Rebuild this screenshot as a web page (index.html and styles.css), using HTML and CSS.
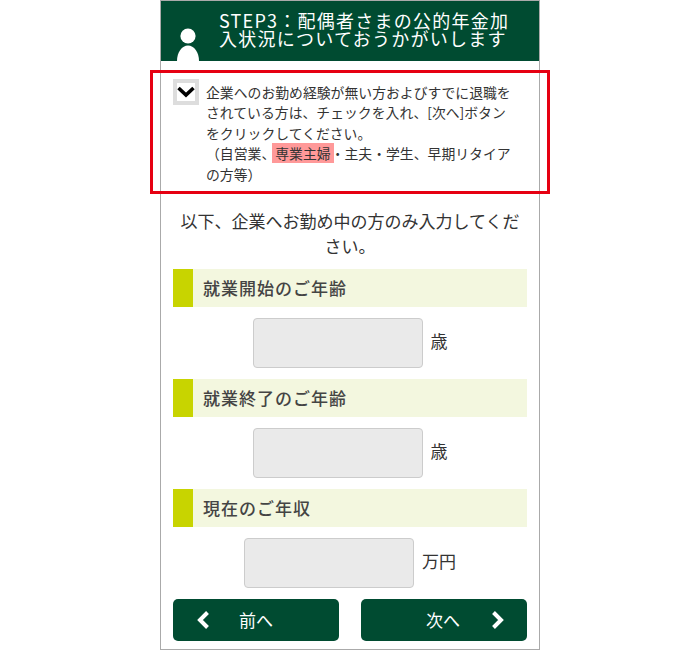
FILE: index.html
```html
<!DOCTYPE html>
<html lang="ja">
<head>
<meta charset="utf-8">
<title>STEP3</title>
<link rel="stylesheet" href="styles.css">
</head>
<body>
<div class="frame">
  <header class="head">
    <svg class="person" width="24" height="33" viewBox="0 0 24 33"><circle cx="12" cy="8" r="7.6" fill="#fff"/><path d="M1 33C1 24 6 17.5 12 17.5C18 17.5 23 24 23 33Z" fill="#fff"/></svg>
    <h1 class="head-title">STEP3：配偶者さまの公的年金加<br>入状況についておうかがいします</h1>
  </header>
  <section class="notice">
    <span class="check">
      <svg width="18" height="12" viewBox="0 0 18 12"><path d="M1.5 2L9 9L16.5 2" fill="none" stroke="#000" stroke-width="3.6"/></svg>
    </span>
    <p class="notice-text">企業へのお勤め経験が無い方およびすでに退職をされている方は、チェックを入れ、[次へ]ボタンをクリックしてください。<br>（自営業、<mark class="hl">専業主婦</mark>・主夫・学生、早期リタイアの方等）</p>
  </section>
  <p class="lead">以下、企業へお勤め中の方のみ入力してください。</p>
  <h2 class="bar">就業開始のご年齢</h2>
  <div class="row"><span class="field"></span><span class="unit">歳</span></div>
  <h2 class="bar">就業終了のご年齢</h2>
  <div class="row"><span class="field"></span><span class="unit">歳</span></div>
  <h2 class="bar">現在のご年収</h2>
  <div class="row"><span class="field"></span><span class="unit">万円</span></div>
  <nav class="nav">
    <a class="btn btn-prev">
      <svg class="chev" width="14" height="20" viewBox="0 0 14 20"><path d="M11.5 2.5L4 10L11.5 17.5" fill="none" stroke="#fff" stroke-width="4"/></svg>
      <span class="btn-label">前へ</span>
    </a>
    <a class="btn btn-next">
      <span class="btn-label">次へ</span>
      <svg class="chev" width="14" height="20" viewBox="0 0 14 20"><path d="M2.5 2.5L10 10L2.5 17.5" fill="none" stroke="#fff" stroke-width="4"/></svg>
    </a>
  </nav>
  <div class="redbox"></div>
</div>
</body>
</html>
```
FILE: styles.css
```css
* { box-sizing: border-box; }
html, body { margin: 0; padding: 0; background: #fff; }
body { height: 650px; overflow: hidden; font-family: "Noto Sans CJK JP", "Noto Sans", sans-serif; color: #333; }
.frame { position: relative; width: 380px; height: 650px; margin: 0 auto; border: 1px solid #aaa; }
.head { display: flex; height: 60px; background: #004b31; padding-left: 15px; overflow: hidden; }
.person { flex: none; align-self: flex-end; }
.head-title { margin: 10px 0 0 19px; font-size: 18px; line-height: 18px; font-weight: 400; letter-spacing: 1.25px; color: #fff; white-space: nowrap; }
.notice { display: flex; align-items: flex-start; height: 147px; padding: 18px 12px 0; }
.check { flex: none; display: flex; align-items: center; justify-content: center; width: 26px; height: 26px; border: 4px solid #ddd; background: #fff; }
.notice-text { margin: 3px 0 0 7px; width: 312px; font-size: 13.85px; line-height: 20.4px; color: #333; }
.hl { background: #f99; color: #333; box-shadow: -3px 0 #f99, 3px 0 #f99; }
.lead { margin: 0 12px; height: 61px; font-size: 17px; line-height: 25px; text-align: center; color: #333; }
.bar { margin: 0 12px; height: 38px; padding-left: 10px; border-left: 20px solid #c8d400; background: #f3f7df; font-size: 17px; line-height: 38px; font-weight: 500; letter-spacing: 1px; color: #444; }
.row { display: flex; align-items: center; justify-content: center; gap: 8px; height: 72px; }
.field { width: 170px; height: 50px; border: 1px solid #ccc; border-radius: 4px; background: #eaeaea; }
.unit { font-size: 17px; color: #333; padding-bottom: 6px; }
.nav { display: flex; justify-content: space-between; padding: 0 12px; }
.btn { display: flex; align-items: center; width: 166px; height: 42px; border-radius: 5px; background: #004b31; color: #fff; font-size: 17px; }
.btn-label { padding-bottom: 2px; }
.btn-prev { padding-left: 23px; gap: 29px; }
.btn-next { padding-left: 65px; gap: 31px; }
.chev { flex: none; }
.redbox { position: absolute; left: -11px; top: 69px; width: 400px; height: 124px; border: 3px solid #e60012; pointer-events: none; }
```
